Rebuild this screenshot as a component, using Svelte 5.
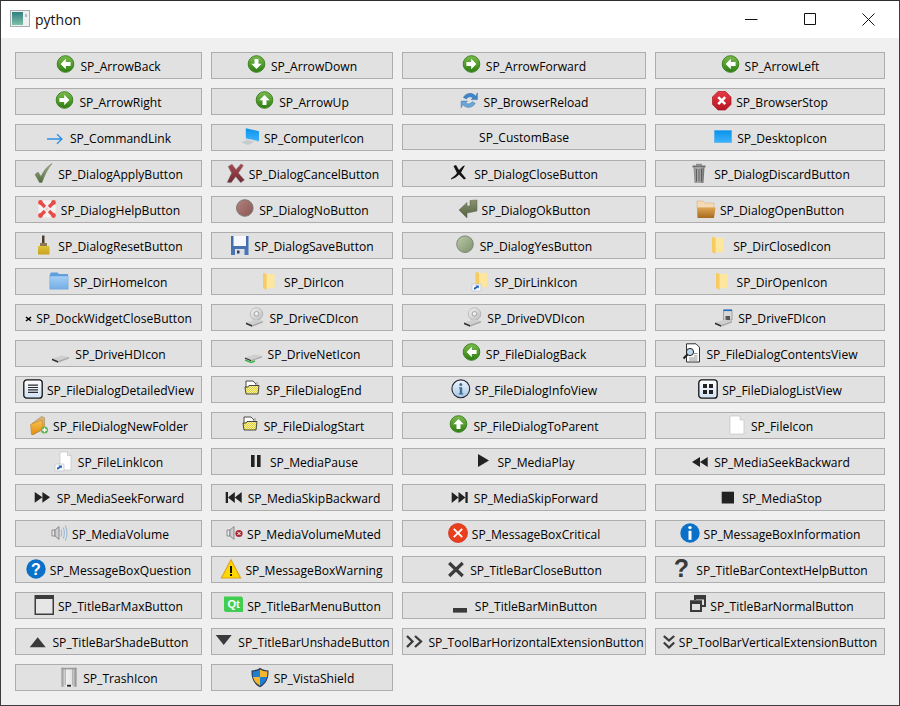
<script>
	const ball = (rot) => `<circle cx="9.5" cy="9" r="8.3" fill="url(#green)" stroke="#3f8322"/><path transform="rotate(${rot} 9.5 9)" d="M9.8 3.8 4.6 9l5.2 5.2V11h4.8V7H9.8z" fill="#fff"/>`;
	const narrowFolder = `<path d="M6 3h8.6v14.2H6z" fill="#fde69e"/><path d="M3 1.8 6.6 3v16L3 17z" fill="#f6cb62"/>`;
	const linkBadge = `<path d="M1 13h9v7H1z" fill="#f4f6fa" stroke="#b8c0cc" stroke-width=".6"/><path d="M3 18.6v-1.8l2.4-1.4-1-.8h3.4v3l-.9-1-2.4 1.4-.2.6z" fill="#1c5fb0"/>`;
	const drive = `<path d="M1 15.6 11 12.6l7 1.5-11 4z" fill="#cfcfcf"/><path d="M1 15.6 7 18.1v1.6L1 17.2z" fill="#2f2f2f"/><path d="m7 18.1 11-4v1.5l-11 4.1z" fill="#a8a8a8"/>`;
	const disc = `<circle cx="11.5" cy="7" r="6.3" fill="url(#silver)" stroke="#a5a5a5" stroke-width=".6"/><circle cx="11.5" cy="6.8" r="2.3" fill="#efefef" stroke="#8e8e8e" stroke-width=".7"/>`;
	const tiny = `<path d="M4 2h7l3 3v4H4z" fill="#fff" stroke="#222" stroke-width=".8"/><path d="M14 3h2v4h-2z" fill="#b9b9b9"/><path d="M3 8h3l1-1.5h10l-1 8.500H4z" fill="url(#dither)" stroke="#222" stroke-width=".8"/>`;
	const speaker = `<path d="M4 7h3v6H4z" fill="#e9e9e9" stroke="#777" stroke-width=".8"/><path d="m7 7 4-3.400v12.800L7 13z" fill="#cfcfcf" stroke="#777" stroke-width=".8"/>`;

	const icons = {
		back: ball(0),
		down: ball(-90),
		forward: ball(180),
		up: ball(90),
		link: `<path d="M1 12h15M11 7.200 16 12l-5 4.800" fill="none" stroke="#2b90e6" stroke-width="1.300"/>`,
		computer: `<path d="M1 15.500 7 13l7 2-6 3z" fill="#c5cace"/><path d="M5.800 1.200 19 4.200v10L5.800 11.400z" fill="url(#sky)"/><path d="m5.800 11.400 13.200 2.800v.8L5.800 12.200z" fill="#c9d2da"/>`,
		reload: `<path d="M15.800 5.200A7.400 7.400 0 0 0 3.400 6.400l3 1.600a4 4 0 0 1 6.400-1l-1.600 1.600h6.200V1.800z" fill="#3f84c6" stroke="#2d6ca8" stroke-width=".5"/><path d="M2.800 13.500a7.400 7.400 0 0 0 12.400-1.200l-3-1.600a4 4 0 0 1-6.400 1l1.600-1.600H1.200v6.600z" fill="#6ea6d8" stroke="#2d6ca8" stroke-width=".5"/>`,
		stop: `<path d="M6 .5h7.400L19 6v7.400L13.400 19H6L.5 13.400V6z" fill="url(#red)" stroke="#a81420" stroke-width=".7"/><path d="m6.200 6.200 7 7m0-7-7 7" stroke="#fff" stroke-width="2.600"/>`,
		desktop: `<path d="M1 3h18v13H1z" fill="#7fbce8"/><path d="M1.600 3.600h16.800v11.800H1.600z" fill="url(#sky)"/>`,
		apply: `<path d="M1 11.500 4 9l3 4.500C9.500 8 13 3.500 18 .5 13.500 6 10.500 12 8 19.500H5.500z" fill="url(#olive)" stroke="#6d7762" stroke-width=".5"/>`,
		cancel: `<path d="M2 19.500 6.500 10 3 3.500 7 1l4 5.500L16 .8l2.500 1.700L13.500 10l6 7-3.800 2.800-5-6-4.500 6z" fill="url(#wine)" stroke="#9a9a9a" stroke-width=".5"/>`,
		close: `<path d="M1 15.500c3-2 4.500-3.500 6-5.500L3.500 3 6 2l3 5 4-4 2-.5L11 9.500l5 6-2 1-5-5c-2 2-4.500 4-8 5z" fill="#141414"/>`,
		discard: `<path d="M2.500 2.500h13v2h-13z" fill="#6e6e6e"/><path d="M6 .8h6v2H6z" fill="#8a8a8a"/><path d="M3.500 4.500h11L13.500 20h-9z" fill="url(#silverdark)"/><path d="M6.500 6v12.500M9 6v12.500M11.500 6v12.500" stroke="#5e5e5e"/>`,
		help: `<rect x="1" y="1" width="18" height="18" rx="2" fill="#f4f1f1" stroke="#dcdcdc" stroke-width=".6"/><path d="m3.500 3.500 4.500 4.500m8.500-4.500L12 8m-8.500 8.500L8 12m8.500 4.500L12 12" stroke="#e84c48" stroke-width="3.400"/><circle cx="3.500" cy="3.500" r="2.400" fill="#e84c48"/><circle cx="16.500" cy="3.500" r="2.400" fill="#e84c48"/><circle cx="3.500" cy="16.500" r="2.400" fill="#e84c48"/><circle cx="16.500" cy="16.500" r="2.400" fill="#e84c48"/><circle cx="10" cy="10" r="1.800" fill="#e9d4d4"/>`,
		no: `<circle cx="9.800" cy="9" r="8.300" fill="url(#brown)" stroke="#77706f" stroke-width=".9"/>`,
		ok: `<path d="M1 11 9 3.500V7h3V1.500L19 1v11L9 14v5z" fill="url(#olive2)" stroke="#59604e" stroke-width=".5"/>`,
		open: `<path d="M1 2h6l2 2h9v5H1z" fill="#f3d9b4" stroke="#cfa878" stroke-width=".5"/><path d="M1 8.500h18.500L18 19H1.500z" fill="url(#copper)"/>`,
		reset: `<path d="M8 .5h2.500v7.500H8z" fill="#4b3b2c"/><path d="M6 8h7v3H6z" fill="#8b7a55"/><path d="M4 11h11.500v8.500H4z" fill="url(#bristle)"/>`,
		save: `<path d="M1 1h17.500v19H1z" fill="url(#navy)"/><path d="M3.500 1h12.500v10H3.500z" fill="#f6f8fb"/><path d="M5 14h9.500v6H5z" fill="#dcdfe4"/><path d="M7 15.500h2.500v3H7z" fill="#2e3d55"/>`,
		yes: `<circle cx="9" cy="9.200" r="8.300" fill="url(#sage)" stroke="#787f72" stroke-width=".9"/>`,
		dirhome: `<path d="M.8 3.500 2 1.500h6.500L10 3h9v3H.8z" fill="#5e9fdc"/><path d="M.8 5h18.400v13.200H.8z" fill="url(#folderblue)" stroke="#6ea3d8" stroke-width=".5"/>`,
		dir: narrowFolder,
		dirlink: `<g transform="translate(1.500 -1)">${narrowFolder}</g>${linkBadge}`,
		dock: `<path d="m1 1 5 4m0-4L1 5" stroke="#000" stroke-width="1.600"/>`,
		cd: disc + drive,
		fd: `<path d="M9.500 3h8.500v10H9.500z" fill="#d8d8d8" stroke="#777" stroke-width=".6"/><path d="M9.500 2.500h8.500v1.600H9.500z" fill="#1f6fc0"/><path d="M11.500 9h4.500v4h-4.500z" fill="#555"/>` + drive,
		hd: drive,
		net: `<path d="M1 14.600 11 11.600l7 1.500-11 4z" fill="#cfcfcf"/><path d="M1 14.600 7 17.100v1.200L1 15.800z" fill="#2f2f2f"/><path d="m7 17.100 11-4v1.300l-11 4z" fill="#a8a8a8"/><path d="m1 17 6 2.500 4-1.500" fill="none" stroke="#3bb54a" stroke-width="1.500"/>`,
		contents: `<path d="M4.500 .8h9.500l3.500 3.500V19H4.500z" fill="#fff" stroke="#1c1c1c" stroke-width=".9"/><path d="M12 10.500h3.500M12 13h3.500M7 15h8.500M7 17h8.500" stroke="#777" stroke-width=".8"/><circle cx="8" cy="9" r="3.600" fill="#b8d8f2" stroke="#1e1e1e"/><path d="m5.500 11.500-4 4" stroke="#1e1e1e" stroke-width="2"/>`,
		detailed: `<rect x=".8" y=".8" width="18.400" height="18.400" rx="3" fill="url(#pale)" stroke="#111" stroke-width="1.300"/><path d="M5 6.100h10M5 8.500h10M5 10.900h10M5 13.300h10" stroke="#2b2b2b" stroke-width="1.200"/>`,
		list: `<rect x=".8" y=".8" width="18.400" height="18.400" rx="3" fill="url(#pale)" stroke="#111" stroke-width="1.300"/><path d="M5 5h4v4H5zM11 5h4v4h-4zM5 11h4v4H5zM11 11h4v4h-4z" fill="#222"/>`,
		end: tiny,
		start: tiny,
		info: `<circle cx="9.800" cy="9.800" r="8.900" fill="url(#pale2)" stroke="#2a2a38" stroke-width="1.100"/><circle cx="9.800" cy="5.500" r="1.500" fill="#42708f"/><path d="M8 8.200h3.200v6h1v1.200H7.800v-1.200h1v-4.700H8z" fill="#42708f"/>`,
		newfolder: `<path d="M3 8.500 12.500 1.500l3 1.200v11L4.500 19.500H3z" fill="#d9b078" stroke="#9c7a40" stroke-width=".5"/><path d="M1.500 9.500 13 5l1.500 8.500L4 19.500H2.500z" fill="url(#amber)" stroke="#b57b1e" stroke-width=".5"/><circle cx="15.500" cy="15" r="3.500" fill="#5cb44a"/><path d="M15.500 12.800v4.400M13.300 15h4.400" stroke="#fff" stroke-width="1.300"/>`,
		file: `<path d="M3 1h10l4 4v14H3z" fill="#fff" stroke="#c4c4c4" stroke-width=".7"/><path d="M13 1v4h4" fill="#e6e6e6" stroke="#c4c4c4" stroke-width=".7"/>`,
		filelink: `<path d="M6 1h7.500l3.500 3.500V19H6z" fill="#fff" stroke="#c4c4c4" stroke-width=".7"/><path d="M13.500 1v3.500H17" fill="#e6e6e6" stroke="#c4c4c4" stroke-width=".7"/>${linkBadge}`,
		pause: `<path d="M5 4h3.600v12H5zM11 4h3.600v12H11z" fill="#222"/>`,
		play: `<path d="M5 3v13l11-6.500z" fill="#222"/>`,
		seekback: `<path d="M2 11l8-5v10zM10 11l7.700-5v10z" fill="#222"/>`,
		seekfwd: `<path d="M1.700 5v10.700l7.700-5.350zM9.400 5v10.700l7.700-5.350z" fill="#222"/>`,
		skipback: `<path d="M1.700 5h2.300v11H1.700zM4 10.500l6.800-5.500v11zM10.800 10.500l6.900-5.500v11z" fill="#222"/>`,
		skipfwd: `<path d="M1.700 5v11l6.800-5.500zM8.500 5v11l6.900-5.500zM15.400 5h2.300v11h-2.300z" fill="#222"/>`,
		stopsq: `<path d="M3.700 4.700H16v11.800H3.700z" fill="#222"/>`,
		volume: speaker + `<path d="M13 6.500q1.500 3.500 0 7M15.200 4.500q2.400 5.500 0 11M17.300 2.500q3.400 7.500 0 15" fill="none" stroke="#9fb8d3" stroke-width="1.100"/>`,
		muted: speaker + `<circle cx="16" cy="10.500" r="3.600" fill="#a82a37"/><path d="m14.500 9 3 3m0-3-3 3" stroke="#fff"/>`,
		critical: `<circle cx="10" cy="10" r="9.500" fill="#ea3f1e" stroke="#c92d12" stroke-width=".7"/><path d="m5.800 5.800 8.400 8.400m0-8.400-8.400 8.400" stroke="#fff" stroke-width="1.800"/>`,
		information: `<circle cx="10" cy="10" r="9.700" fill="#0a70c8"/><circle cx="10" cy="4.600" r="1.700" fill="#fff"/><path d="M8.500 7.800h3v9h-3z" fill="#fff"/>`,
		question: `<circle cx="10" cy="10" r="9.700" fill="#0a70c8"/><text x="10" y="15.800" text-anchor="middle" class="glyph" font-size="16" fill="#fff">?</text>`,
		warning: `<path d="M10 .8 19.600 19H.4z" fill="#fdd800" stroke="#e0a21a" stroke-width="1.100"/><path d="M9 7h2v7H9zM9 15h2v2H9z" fill="#111"/>`,
		tbclose: `<path d="m3.200 4 13.500 13m0-13L3.200 17" stroke="#3a3a3a" stroke-width="3.200"/>`,
		tbhelp: `<text x="9.500" y="18" text-anchor="middle" class="glyph" font-size="25" fill="#3a3a3a">?</text>`,
		tbmax: `<path d="M.5 0h19.500v20H.5z" fill="#3c3c3c"/><path d="M2 4h16.500v14.500H2z" fill="#e6e6e6"/>`,
		tbmenu: `<path d="M1 1.500h17.500L20 3v14H2.500L1 15.500z" fill="#41cd52"/><text x="10.500" y="13" text-anchor="middle" class="glyph" font-size="11" fill="#fff">Qt</text>`,
		tbmin: `<path d="M2 13h14v4.600H2z" fill="#3a3a3a"/>`,
		tbnormal: `<path d="M9 5V1h10v10h-3.500" fill="none" stroke="#3a3a3a" stroke-width="2"/><path d="M8 2h12v2.500H8z" fill="#3a3a3a"/><path d="M5 6.500h10V16H5z" fill="#e1e1e1" stroke="#3a3a3a" stroke-width="2"/><path d="M4 5.500h12V9H4z" fill="#3a3a3a"/>`,
		shade: `<path d="M1.700 16.300h16L9.700 6.300z" fill="#3a3a3a"/>`,
		unshade: `<path d="M1.700 4h16l-8 10z" fill="#3a3a3a"/>`,
		hext: `<path d="m3 5 5.500 5.500L3 16M11 5l6 5.500-6 5.500" fill="none" stroke="#3a3a3a" stroke-width="2.300"/>`,
		vext: `<path d="m.8 5 5.200 4.500L11.200 5M.8 11.500 6 16.500l5.200-5" fill="none" stroke="#3a3a3a" stroke-width="2.200"/>`,
		trash: `<path d="M2.500 .8h15v19h-15z" fill="url(#metal)"/><path d="M2.500 .8h15v1.600h-15z" fill="#9a9a9a"/><path d="M6.500 2v16M13.500 2v16" stroke="#a9a9a9" stroke-width=".8"/><path d="M8 17.800h4v1.800H8z" fill="#222"/>`,
		shield: `<path d="M10 .8C7.500 2.800 4.500 3.300 1.500 3.400c-.3 7.500 1.800 13.300 8.500 16.800 6.700-3.500 8.800-9.300 8.500-16.800C15.500 3.300 12.500 2.800 10 .8z" fill="#2e3a52"/><path d="M10 2.400V10H3c-.3-1.800-.4-3.500-.4-5.600 2.900-.2 5.300-.6 7.400-2z" fill="#1f7ed0"/><path d="M10 2.400c2.100 1.400 4.500 1.800 7.400 2 0 2.100-.1 3.800-.4 5.600h-7z" fill="#f2b72c"/><path d="M3 10h7v8.700C6 16.500 3.900 13.800 3 10z" fill="#f2b72c"/><path d="M10 10h7c-.9 3.800-3 6.500-7 8.700z" fill="#1f7ed0"/>`,
	};

	// most style pixmaps sit in a 20px box, these two come back narrower
	const viewBoxes = { dock: '0 0 7 6', vext: '0 0 12 20' };

	const buttons = [
		['SP_ArrowBack', 'back'], ['SP_ArrowDown', 'down'], ['SP_ArrowForward', 'forward'], ['SP_ArrowLeft', 'back'],
		['SP_ArrowRight', 'forward'], ['SP_ArrowUp', 'up'], ['SP_BrowserReload', 'reload'], ['SP_BrowserStop', 'stop'],
		['SP_CommandLink', 'link'], ['SP_ComputerIcon', 'computer'], ['SP_CustomBase', null], ['SP_DesktopIcon', 'desktop'],
		['SP_DialogApplyButton', 'apply'], ['SP_DialogCancelButton', 'cancel'], ['SP_DialogCloseButton', 'close'], ['SP_DialogDiscardButton', 'discard'],
		['SP_DialogHelpButton', 'help'], ['SP_DialogNoButton', 'no'], ['SP_DialogOkButton', 'ok'], ['SP_DialogOpenButton', 'open'],
		['SP_DialogResetButton', 'reset'], ['SP_DialogSaveButton', 'save'], ['SP_DialogYesButton', 'yes'], ['SP_DirClosedIcon', 'dir'],
		['SP_DirHomeIcon', 'dirhome'], ['SP_DirIcon', 'dir'], ['SP_DirLinkIcon', 'dirlink'], ['SP_DirOpenIcon', 'dir'],
		['SP_DockWidgetCloseButton', 'dock'], ['SP_DriveCDIcon', 'cd'], ['SP_DriveDVDIcon', 'cd'], ['SP_DriveFDIcon', 'fd'],
		['SP_DriveHDIcon', 'hd'], ['SP_DriveNetIcon', 'net'], ['SP_FileDialogBack', 'back'], ['SP_FileDialogContentsView', 'contents'],
		['SP_FileDialogDetailedView', 'detailed'], ['SP_FileDialogEnd', 'end'], ['SP_FileDialogInfoView', 'info'], ['SP_FileDialogListView', 'list'],
		['SP_FileDialogNewFolder', 'newfolder'], ['SP_FileDialogStart', 'start'], ['SP_FileDialogToParent', 'up'], ['SP_FileIcon', 'file'],
		['SP_FileLinkIcon', 'filelink'], ['SP_MediaPause', 'pause'], ['SP_MediaPlay', 'play'], ['SP_MediaSeekBackward', 'seekback'],
		['SP_MediaSeekForward', 'seekfwd'], ['SP_MediaSkipBackward', 'skipback'], ['SP_MediaSkipForward', 'skipfwd'], ['SP_MediaStop', 'stopsq'],
		['SP_MediaVolume', 'volume'], ['SP_MediaVolumeMuted', 'muted'], ['SP_MessageBoxCritical', 'critical'], ['SP_MessageBoxInformation', 'information'],
		['SP_MessageBoxQuestion', 'question'], ['SP_MessageBoxWarning', 'warning'], ['SP_TitleBarCloseButton', 'tbclose'], ['SP_TitleBarContextHelpButton', 'tbhelp'],
		['SP_TitleBarMaxButton', 'tbmax'], ['SP_TitleBarMenuButton', 'tbmenu'], ['SP_TitleBarMinButton', 'tbmin'], ['SP_TitleBarNormalButton', 'tbnormal'],
		['SP_TitleBarShadeButton', 'shade'], ['SP_TitleBarUnshadeButton', 'unshade'], ['SP_ToolBarHorizontalExtensionButton', 'hext'], ['SP_ToolBarVerticalExtensionButton', 'vext'],
		['SP_TrashIcon', 'trash'], ['SP_VistaShield', 'shield'],
	];
</script>

<svg class="defs" width="0" height="0" aria-hidden="true">
	<defs>
		<linearGradient id="green" x2="0" y2="1"><stop offset="0" stop-color="#7dbb4e" /><stop offset="1" stop-color="#2c7d10" /></linearGradient>
		<linearGradient id="sky" x2="0" y2="1"><stop offset="0" stop-color="#0a93ea" /><stop offset="1" stop-color="#3cb2fb" /></linearGradient>
		<linearGradient id="red" x2="0" y2="1"><stop offset="0" stop-color="#e63a44" /><stop offset="1" stop-color="#b81524" /></linearGradient>
		<linearGradient id="olive" x2="0" y2="1"><stop offset="0" stop-color="#a3b08e" /><stop offset="1" stop-color="#4f6f3c" /></linearGradient>
		<linearGradient id="olive2" x2="0" y2="1"><stop offset="0" stop-color="#88936f" /><stop offset="1" stop-color="#535f40" /></linearGradient>
		<linearGradient id="wine" x2="0" y2="1"><stop offset="0" stop-color="#a74a53" /><stop offset="1" stop-color="#6f2b33" /></linearGradient>
		<linearGradient id="silver" x2="1" y2="1"><stop offset="0" stop-color="#f2f2f2" /><stop offset="1" stop-color="#bcbcbc" /></linearGradient>
		<linearGradient id="silverdark" x2="1" y2="0"><stop offset="0" stop-color="#8d8d8d" /><stop offset=".5" stop-color="#b0b0b0" /><stop offset="1" stop-color="#6b6b6b" /></linearGradient>
		<linearGradient id="brown" x2="1" y2="1"><stop offset="0" stop-color="#b08480" /><stop offset="1" stop-color="#8d5552" /></linearGradient>
		<linearGradient id="copper" x2="0" y2="1"><stop offset="0" stop-color="#dfa654" /><stop offset="1" stop-color="#a86a1e" /></linearGradient>
		<linearGradient id="bristle" x2="0" y2="1"><stop offset="0" stop-color="#dcc338" /><stop offset="1" stop-color="#c9a01e" /></linearGradient>
		<linearGradient id="navy" x2="0" y2="1"><stop offset="0" stop-color="#3f6aa8" /><stop offset="1" stop-color="#4978b8" /></linearGradient>
		<linearGradient id="sage" x2="1" y2="1"><stop offset="0" stop-color="#bcc9ac" /><stop offset="1" stop-color="#7d9268" /></linearGradient>
		<linearGradient id="folderblue" x2="0" y2="1"><stop offset="0" stop-color="#a5cef4" /><stop offset="1" stop-color="#74aee6" /></linearGradient>
		<linearGradient id="pale" x2="0" y2="1"><stop offset="0" stop-color="#ffffff" /><stop offset="1" stop-color="#cfe0f4" /></linearGradient>
		<linearGradient id="pale2" x2="0" y2="1"><stop offset="0" stop-color="#eef5fc" /><stop offset="1" stop-color="#a9c8e8" /></linearGradient>
		<linearGradient id="amber" x2="0" y2="1"><stop offset="0" stop-color="#f8c14d" /><stop offset="1" stop-color="#e48f16" /></linearGradient>
		<linearGradient id="metal" x2="1" y2="0"><stop offset="0" stop-color="#8f8f8f" /><stop offset=".3" stop-color="#f0f0f0" /><stop offset=".7" stop-color="#e4e4e4" /><stop offset="1" stop-color="#858585" /></linearGradient>
		<pattern id="dither" width="2" height="2" patternUnits="userSpaceOnUse">
			<rect width="2" height="2" fill="#fbf3a0" />
			<rect width="1" height="1" fill="#d9cf3a" />
			<rect x="1" y="1" width="1" height="1" fill="#d9cf3a" />
		</pattern>
	</defs>
</svg>

<div class="window">
	<header class="titlebar">
		<svg class="app-icon" width="20" height="17" viewBox="0 0 20 17">
			<defs>
				<linearGradient id="appfill" x2="0" y2="1"><stop offset="0" stop-color="#2f7f82" /><stop offset="1" stop-color="#7fc0a8" /></linearGradient>
			</defs>
			<rect x=".5" y=".5" width="19" height="16" fill="#eef0f2" stroke="#a9adb1" />
			<rect x="2" y="2" width="11" height="13" fill="url(#appfill)" />
			<rect x="15.500" y="4" width="1" height="3" fill="#5f8f95" />
		</svg>
		<span class="title">python</span>
		<div class="controls">
			<span class="control"><svg width="13" height="13" viewBox="0 0 13 13"><path d="M0 6.500h12.500" stroke="#111" /></svg></span>
			<span class="control"><svg width="13" height="13" viewBox="0 0 13 13"><path d="M.5.5h11v11H.5z" fill="none" stroke="#111" /></svg></span>
			<span class="control"><svg width="13" height="13" viewBox="0 0 13 13"><path d="m.5.500 12 12m0-12-12 12" fill="none" stroke="#111" /></svg></span>
		</div>
	</header>

	<main class="grid">
		{#each buttons as [label, icon]}
			<button class="btn" type="button">
				{#if icon}
					<svg class="icon {icon}" viewBox={viewBoxes[icon] ?? '0 0 20 20'}>{@html icons[icon]}</svg>
					<span class="label">{label}</span>
				{:else}
					<span class="label plain">{label}</span>
				{/if}
			</button>
		{/each}
	</main>
</div>

<style>
	:global(body) {
		background: #f0f0f0;
	}

	.defs {
		display: block;
		height: 0;
	}

	.window {
		display: flex;
		flex-direction: column;
		box-sizing: border-box;
		width: 900px;
		height: 706px;
		border: 1px solid #3d3d3d;
		border-top-color: #2e2e2e;
		background: #f0f0f0;
		overflow: hidden;
	}

	.titlebar {
		display: flex;
		align-items: center;
		height: 37px;
		padding-left: 9px;
		background: #fff;
	}

	.app-icon {
		flex: none;
		margin-top: -2px;
	}

	.title {
		margin-left: 5px;
		font-family: "Open Sans", sans-serif;
		font-size: 14px;
		color: #111;
	}

	.controls {
		display: flex;
		margin-left: auto;
		padding-right: 1px;
	}

	.control {
		display: flex;
		align-items: center;
		justify-content: center;
		width: 58.5px;
		height: 37px;
	}

	.grid {
		display: grid;
		grid-template-columns: 187px 182px 244px 230px;
		grid-auto-rows: 27px;
		gap: 9px;
		align-items: start;
		padding: 14px;
	}

	.btn {
		display: flex;
		align-items: flex-start;
		justify-content: center;
		gap: 4px;
		box-sizing: border-box;
		margin: 0;
		padding: 2px 0;
		border: 1px solid #adadad;
		border-radius: 0;
		background: #e1e1e1;
		color: #000;
		font-family: "Open Sans", sans-serif;
		font-size: 12.1px;
		line-height: 19px;
		white-space: nowrap;
	}

	.icon {
		flex: none;
		width: 20px;
		height: 20px;
		overflow: visible;
	}

	.icon.dock {
		width: 7px;
		height: 6px;
		margin-top: 9px;
	}

	.icon.vext {
		width: 12px;
	}

	.label {
		display: block;
		margin-top: 2px;
	}

	.label.plain {
		margin-top: 1px;
	}

	:global(.glyph) {
		font-family: "Liberation Sans", sans-serif;
		font-weight: 700;
	}
</style>
